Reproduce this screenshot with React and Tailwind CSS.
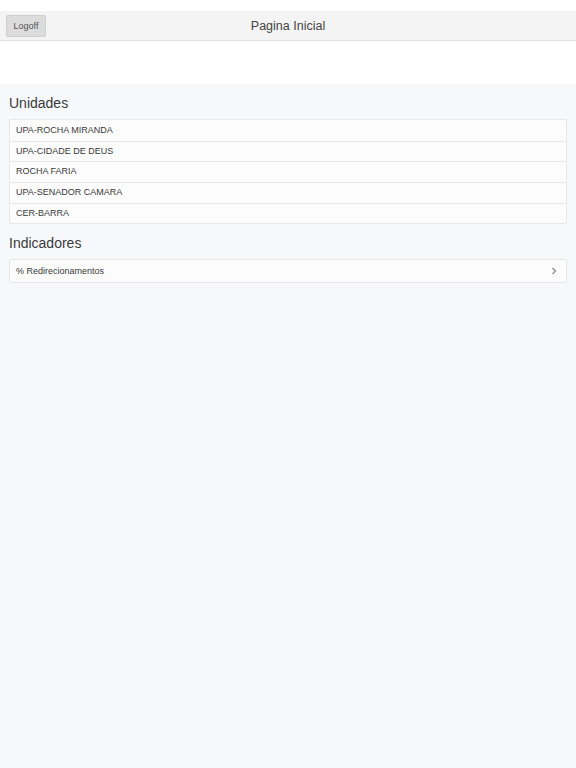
export default function App() {
  const unidades = ["UPA-ROCHA MIRANDA", "UPA-CIDADE DE DEUS", "ROCHA FARIA", "UPA-SENADOR CAMARA", "CER-BARRA"];
  return (
    <div className="min-h-[768px] w-[576px] flex flex-col bg-[#f7f8fc]" style={{ fontFamily: '"Liberation Sans", Arial, sans-serif' }}>
      <div className="h-[11px] bg-white" />
      <div className="relative h-[30px] bg-[#f4f4f4] border-b border-[#e2e2e2] flex items-center justify-center pt-[2px]">
        <button className="absolute left-[6px] top-[4px] h-[22px] w-[40px] bg-[#dcdcdc] border border-[#cfcfcf] rounded-[2px] text-[9px] text-[#555] flex items-center justify-center pt-[1px]">Logoff</button>
        <span className="text-[12.5px] text-[#444]">Pagina Inicial</span>
      </div>
      <div className="h-[43px] bg-white" />
      <div className="px-[9px] flex flex-col">
        <h2 className="text-[14px] text-[#3a3a3a] mt-[10px] mb-[7px] leading-[18px]">Unidades</h2>
        <div className="border border-[#e8e8e8] bg-[#fcfcfc] rounded-[2px] w-[558px]">
          {unidades.map((u, i) => (
            <div key={u} className={`h-[20.7px] flex items-center px-[6px] text-[9px] text-[#3a3a3a] ${i > 0 ? "border-t border-[#e8e8e8]" : ""}`}>{u}</div>
          ))}
        </div>
        <h2 className="text-[14px] text-[#3a3a3a] mt-[10px] mb-[7px] leading-[18px]">Indicadores</h2>
        <div className="border border-[#e8e8e8] bg-[#fcfcfc] rounded-[2px] w-[558px] h-[24px] flex items-center justify-between px-[6px]">
          <span className="text-[9px] text-[#3a3a3a]">% Redirecionamentos</span>
          <svg width="8" height="10" viewBox="0 0 8 10" className="mr-[2px]">
            <path d="M2.5 2 L5.5 5 L2.5 8" fill="none" stroke="#999" strokeWidth="1.5" />
          </svg>
        </div>
      </div>
    </div>
  );
}
